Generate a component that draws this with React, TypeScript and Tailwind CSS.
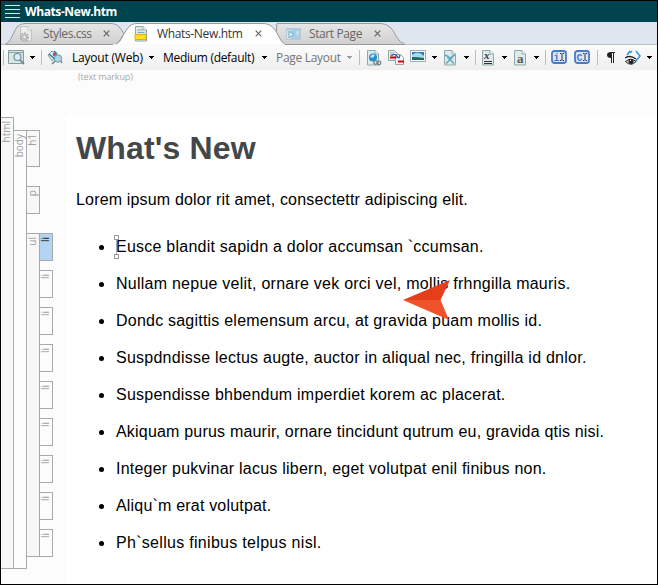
import React from "react";

const lines = [
  { text: "Eusce blandit sapidn a dolor accumsan `ccumsan.", track: "tracking-[0.235px]" },
  { text: "Nullam nepue velit, ornare vek orci vel, mollis frhngilla mauris.", track: "tracking-[0.245px]" },
  { text: "Dondc sagittis elemensum arcu, at gravida puam mollis id.", track: "tracking-[0.22px]" },
  { text: "Suspdndisse lectus augte, auctor in aliqual nec, fringilla id dnlor.", track: "tracking-[0.25px]" },
  { text: "Suspendisse bhbendum imperdiet korem ac placerat.", track: "tracking-[0.235px]" },
  { text: "Akiquam purus maurir, ornare tincidunt qutrum eu, gravida qtis nisi.", track: "tracking-[0.195px]" },
  { text: "Integer pukvinar lacus libern, eget volutpat enil finibus non.", track: "tracking-[0.23px]" },
  { text: "Aliqu`m erat volutpat.", track: "tracking-[0.19px]" },
  { text: "Ph`sellus finibus telpus nisl.", track: "tracking-[0.3px]" },
];

function Caret({ color = "#000" }: { color?: string }) {
  return (
    <svg width="5" height="3" viewBox="0 0 5 3" className="shrink-0" shapeRendering="crispEdges">
      <path d="M0 0h5v1h-1v1h-1v1h-1v-1h-1v-1h-1z" fill={color} />
    </svg>
  );
}

function Sep({ className }: { className: string }) {
  return <div className={`h-[15px] w-px shrink-0 bg-[#bcbcbc] ${className}`} />;
}

function Cross() {
  return (
    <svg width="7" height="7" viewBox="0 0 7 7" className="shrink-0">
      <path d="M.7.7l5.6 5.6M6.3.7L.7 6.3" stroke="#666" strokeWidth="1.2" />
    </svg>
  );
}

function DocIcon({ children, w = 12, faded = false }: { children?: React.ReactNode; w?: number; faded?: boolean }) {
  return (
    <svg width={w} height="16" viewBox={`0 0 ${w} 16`} className="shrink-0 overflow-visible">
      <path d="M.5.5h7.500l3.500 3.500v11H.5z" fill={faded ? "#ececec" : "#dfeaea"} stroke={faded ? "#c2c2c2" : "#8fa9a8"} />
      <path d="M8 .5V4h3.500" fill="#fff" stroke={faded ? "#c2c2c2" : "#8fa9a8"} />
      {children}
    </svg>
  );
}

function Tag({ children, className = "" }: { children: React.ReactNode; className?: string }) {
  return (
    <span className={`mr-[2px] rotate-180 text-[10px] leading-[12px] font-[Open_Sans,sans-serif] text-[#a0a0a0] [writing-mode:vertical-rl] ${className}`}>{children}</span>
  );
}

function Tabs() {
  return (
    <div className="relative flex h-[23px] items-start bg-[#dfe6f0] text-[12px] leading-[23px] text-[#666]">
      <svg className="absolute top-0 left-0" width="656" height="23" viewBox="0 0 656 23">
        <defs>
          <linearGradient id="idle" x2="0" y2="1">
            <stop offset="0" stopColor="#e6e6e6" />
            <stop offset="1" stopColor="#d0d0d0" />
          </linearGradient>
        </defs>
        <path d="M0 22.500h656" stroke="#bac3c4" />
        <path d="M4 22.500C10 20 12 11 16 5Q19 1.500 24 1.500H110C117 1.500 120 7 123 12L116 22.500z" fill="url(#idle)" stroke="#999" />
        <path d="M276 1.500H378C386 1.500 391 5 395 14Q399 21 404 22.500H280L275 12z" fill="url(#idle)" stroke="#999" />
        <path d="M114 22.500C121 20 121 13 127 6Q130 1.500 136 1.500H262C270 1.500 274 7 277 13Q280 20 284 22.500" fill="#fff" stroke="#999" />
        <path d="M112 23h172" stroke="#fff" strokeWidth="1.500" />
      </svg>
      <div className="relative flex w-[115px] items-center pl-[19px]">
        <DocIcon w={14} faded>
          <circle cx="4.500" cy="11" r="3.600" fill="#e6e6e6" stroke="#aaa" strokeWidth="2" strokeDasharray="1.700 1" />
          <circle cx="4.500" cy="11" r="2" fill="#eee" stroke="#aaa" />
        </DocIcon>
        <span className="ml-[9px] w-[60px] font-[Open_Sans,sans-serif] whitespace-nowrap tracking-[-0.4px]">Styles.css</span>
        <Cross />
      </div>
      <div className="relative flex w-[160px] items-center pl-[19px] text-[#333]">
        <DocIcon w={14}>
          <path d="M2.500 4h5M2.500 6.500h7" stroke="#83a9a8" />
          <path d="M0 8.500h11v5H0z" fill="#ffdf20" stroke="#e2ad10" />
        </DocIcon>
        <span className="ml-[8px] w-[98px] font-[Open_Sans,sans-serif] whitespace-nowrap tracking-[-0.35px]">Whats-New.htm</span>
        <Cross />
      </div>
      <div className="relative flex items-center pl-[10px]">
        <svg width="15" height="12" viewBox="0 0 15 12">
          <path d="M.5.5h14v11H.5z" fill="#a5cfe5" stroke="#b8c9d2" />
          <path d="M1 2h4v9H1z" fill="#d7e8f0" />
          <path d="M3 3v7l5-3.500z" fill="#ddeef8" stroke="#6da9cd" />
          <path d="M10 4h3M10 6h3" stroke="#d3edf8" />
        </svg>
        <span className="ml-[8px] w-[65px] font-[Open_Sans,sans-serif] whitespace-nowrap tracking-[-0.4px]">Start Page</span>
        <Cross />
      </div>
    </div>
  );
}

function Toolbar() {
  return (
    <div className="flex h-[25px] items-center bg-gradient-to-b from-[#fcfcfc] to-[#efefef] pl-[2px] font-[Open_Sans,sans-serif] text-[12px] whitespace-nowrap text-black">
      <Sep className="" />
      <svg width="17" height="15" viewBox="0 0 17 15" className="ml-[4px] shrink-0">
        <path d="M.5.5h15v13H.5z" fill="#dbe5e5" stroke="#819d9c" />
        <path d="M1 2.500h14" stroke="#8ba7a6" />
        <circle cx="9.500" cy="7" r="3.500" fill="#d5edf8" stroke="#789291" strokeWidth="1.200" />
        <path d="M12 10l4 4" stroke="#728b8b" strokeWidth="1.800" />
      </svg>
      <div className="ml-[5px]"><Caret /></div>
      <Sep className="ml-[6px]" />
      <svg width="17" height="15" viewBox="0 0 17 15" className="ml-[5px] shrink-0">
        <path d="M1 5l4-4 5 4-5 6z" fill="#d8eff4" stroke="#7ea4a8" />
        <path d="M2 4l7 6M7 1l3 3" stroke="#367b9e" strokeWidth="1.500" />
        <path d="M6 3h3v3H6z" fill="#ed3e42" />
        <circle cx="11" cy="8.500" r="3.700" fill="#a4d7ee" stroke="#7a9596" />
        <path d="M8 11l-3 3M14 11l1 2" stroke="#6f8787" strokeWidth="1.500" />
      </svg>
      <span className="ml-[8px] w-[77px] tracking-[-0.2px]">Layout (Web)</span>
      <Caret />
      <span className="ml-[9px] w-[99px] tracking-[-0.3px]">Medium (default)</span>
      <Caret />
      <span className="ml-[9px] w-[71px] tracking-[-0.3px] text-[#777]">Page Layout</span>
      <Caret color="#999" />
      <Sep className="ml-[7px]" />
      <div className="ml-[7px]">
        <DocIcon w={15}>
          <circle cx="6" cy="7.500" r="4" fill="#258ed0" />
          <path d="M3 7q2-4 5-2l-2 3z" fill="#b9e5fa" />
          <circle cx="8.500" cy="12.500" r="1.800" fill="none" stroke="#74868a" strokeWidth="1.300" />
          <circle cx="12" cy="13" r="1.800" fill="none" stroke="#74868a" strokeWidth="1.300" />
        </DocIcon>
      </div>
      <svg width="17" height="15" viewBox="0 0 17 15" className="ml-[6px] shrink-0">
        <path d="M.5.5h6l3 3v7h-9z" fill="#e5eeee" stroke="#8caaaa" />
        <path d="M2 3h4M2 5h3" stroke="#aaa" />
        <path d="M7.500 4.500h5l3 3v7h-8z" fill="#f4f8f8" stroke="#8caaaa" />
        <path d="M3 6q5-4 7 2M8 7l3 1 1-3" fill="none" stroke="#285fc7" strokeWidth="1.300" />
        <path d="M2 7.500h6M10 11.500h6" stroke="#d60000" strokeWidth="2" />
      </svg>
      <svg width="16" height="13" viewBox="0 0 16 13" className="mr-[6px] mb-[3px] ml-[5px] shrink-0">
        <path d="M.5.500h15v11H.5z" fill="#fff" stroke="#9aaead" />
        <path d="M2 2h12v5H2z" fill="#2d7bc0" />
        <path d="M2 5q6-5 12 1v2H2z" fill="#a8daef" />
        <path d="M2 7q6 0 12 1v2H2z" fill="#26675b" />
      </svg>
      <Caret />
      <div className="ml-[7px]">
        <DocIcon w={12}>
          <path d="M1 5l3 1.500 2 2.500 2-2.500L11 5M2 13.500l6.500-6M10 13.500l-6.500-6" fill="none" stroke="#62a8c4" strokeWidth="1.700" />
        </DocIcon>
      </div>
      <div className="ml-[8px]"><Caret /></div>
      <Sep className="ml-[6px]" />
      <div className="relative ml-[6px]">
        <DocIcon w={12}><path d="M2 11.500h8M2 13.500h8" stroke="#333" /></DocIcon>
        <span className="absolute top-0 left-[2px] font-[Liberation_Serif,serif] text-[11px] leading-[11px] font-bold text-[#333] italic">x</span>
      </div>
      <div className="ml-[8px]"><Caret /></div>
      <div className="relative ml-[7px]">
        <DocIcon w={12} />
        <span className="absolute top-[2px] left-[3px] font-[Liberation_Serif,serif] text-[13px] leading-[13px] font-bold text-[#555]">a</span>
      </div>
      <div className="ml-[8px]"><Caret /></div>
      <Sep className="ml-[6px]" />
      {["i", "C"].map((letter) => (
        <svg key={letter} width="16" height="14" viewBox="0 0 16 14" className="mr-[2px] mb-[2px] ml-[5px] shrink-0">
          <rect x="1" y="1" width="14" height="12" rx="2.500" fill="#dce8f7" stroke="#477bc5" strokeWidth="1.800" />
          <text x="2.500" y="10.500" fontFamily="Liberation Mono, monospace" fontSize="10" fontWeight="bold" fill="#4a79c9">{letter}</text>
          <path d="M9 3.500h1.500M11.500 3.500H13M11 4v6M9 10.500h1.500M11.500 10.500H13" stroke="#333" />
        </svg>
      ))}
      <Sep className="ml-[5px]" />
      <svg width="8" height="11" viewBox="0 0 8 11" className="ml-[9px] shrink-0">
        <path d="M4 0H8V1H7V11H6V1H5V11H4V6Q0 6 0 3T4 0" fill="#222" />
      </svg>
      <svg width="17" height="16" viewBox="0 0 17 16" className="ml-[10px] shrink-0">
        <path d="M5 1L2 5M7 1L5 3M11 1l4 5-4 5" fill="none" stroke="#3093dc" strokeWidth="1.500" />
        <path d="M0 8q5-3.500 11 1" fill="none" stroke="#222" strokeWidth="1.300" />
        <path d="M.5 11.500q5-4.500 10.500 0-5 5.500-10.500 0" fill="#ddd" stroke="#222" />
        <circle cx="6" cy="11.500" r="2.500" fill="#222" />
        <path d="M5 10h1v1H5z" fill="#fff" />
      </svg>
      <div className="ml-[5px]"><Caret /></div>
    </div>
  );
}

function Structure() {
  return (
    <div className="flex w-[65px] shrink-0 items-start">
      <div className="mt-[33px] flex h-[452px] w-[13px] flex-col items-center border-y border-r border-[#a9a9a9] bg-[#f7f7f7] pt-[3px]">
        <Tag>html</Tag>
      </div>
      <div className="mt-[46px] flex h-[439px] w-[13px] flex-col items-center border-y border-r border-[#a9a9a9] pt-[3px]">
        <Tag>body</Tag>
      </div>
      <div className="mt-[46px] flex w-[13px] flex-col">
        <div className="flex h-[37px] justify-center border-y border-r border-[#a9a9a9] bg-[#f7f7f7] pt-[3px]"><Tag className="self-start">h1</Tag></div>
        <div className="mt-[19px] flex h-[28px] justify-center border-y border-r border-[#a9a9a9] bg-[#f7f7f7] pt-[3px]"><Tag className="self-start">p</Tag></div>
        <div className="mt-[19px] flex h-[324px] justify-center border-y border-r border-[#a9a9a9] bg-[#f7f7f7] pt-[3px]"><Tag className="self-start">ul</Tag></div>
      </div>
      <div className="mt-[149px] flex w-[13px] flex-col gap-[9px]">
        {lines.map((l, i) => (
          <div key={l.text} className={`flex h-[28px] justify-center border-y border-r border-[#a9a9a9] pt-[3px] ${i === 0 ? "bg-[#b3d5f2]" : "bg-[#fcfcfc]"}`}>
            <Tag className={`self-start ${i === 0 ? "text-[#222]!" : ""}`}>li</Tag>
          </div>
        ))}
      </div>
    </div>
  );
}

export default function App() {
  return (
    <div className="flex h-[585px] w-[658px] flex-col overflow-hidden border border-black bg-[#fcfcfc]">
      <header className="flex h-[21px] shrink-0 items-center bg-[#004450] pl-[4px]">
        <div className="flex w-[15px] flex-col gap-[3px]">
          <i className="h-px bg-[#d8e4e5]" /><i className="h-px bg-[#d8e4e5]" /><i className="h-px bg-[#d8e4e5]" /><i className="h-px bg-[#d8e4e5]" />
        </div>
        <span className="ml-[5px] font-[Open_Sans,sans-serif] text-[12px] font-bold tracking-[-0.4px] text-white">Whats-New.htm</span>
      </header>
      <Tabs />
      <Toolbar />
      <div className="h-[14px] shrink-0 pl-[77px] font-[Open_Sans,sans-serif] text-[9px] leading-[14px] tracking-[-0.15px] text-[#aaa]">(text markup)</div>
      <main className="flex min-h-0 flex-1">
        <Structure />
        <article className="relative mt-[31px] flex-1 bg-white pl-[10px] font-[Liberation_Sans,Arial,sans-serif] text-[16px] whitespace-nowrap text-black">
          <h1 className="mt-[13px] text-[32px] leading-[40px] font-bold tracking-[0.15px] text-[#444749]">What's New</h1>
          <p className="mt-[23px] leading-[18px] tracking-[0.17px]">Lorem ipsum dolor rit amet, consectettr adipiscing elit.</p>
          <ul className="mt-[19px]">
            {lines.map((l) => (
              <li key={l.text} className="flex h-[37px] items-center">
                <i className="mt-[2px] mr-[12px] ml-[23px] size-[5px] rounded-full bg-black" />
                <span className={l.track}>{l.text}</span>
              </li>
            ))}
          </ul>
          <svg className="absolute top-[120px] left-[48px]" width="5" height="24" viewBox="0 0 5 24" shapeRendering="crispEdges">
            <path d="M2.500 5v14" stroke="#aaa" />
            <path d="M.5.500h4v4h-4zM.5 19.500h4v4h-4z" fill="#fff" stroke="#999" />
          </svg>
          <svg className="absolute top-[165px] left-[337px]" width="47" height="40" viewBox="0 0 47 40">
            <path d="M0 20L47 0 37.500 20z" fill="#e63e18" />
            <path d="M0 20h37.500L46 40z" fill="#f05329" />
          </svg>
        </article>
      </main>
    </div>
  );
}
